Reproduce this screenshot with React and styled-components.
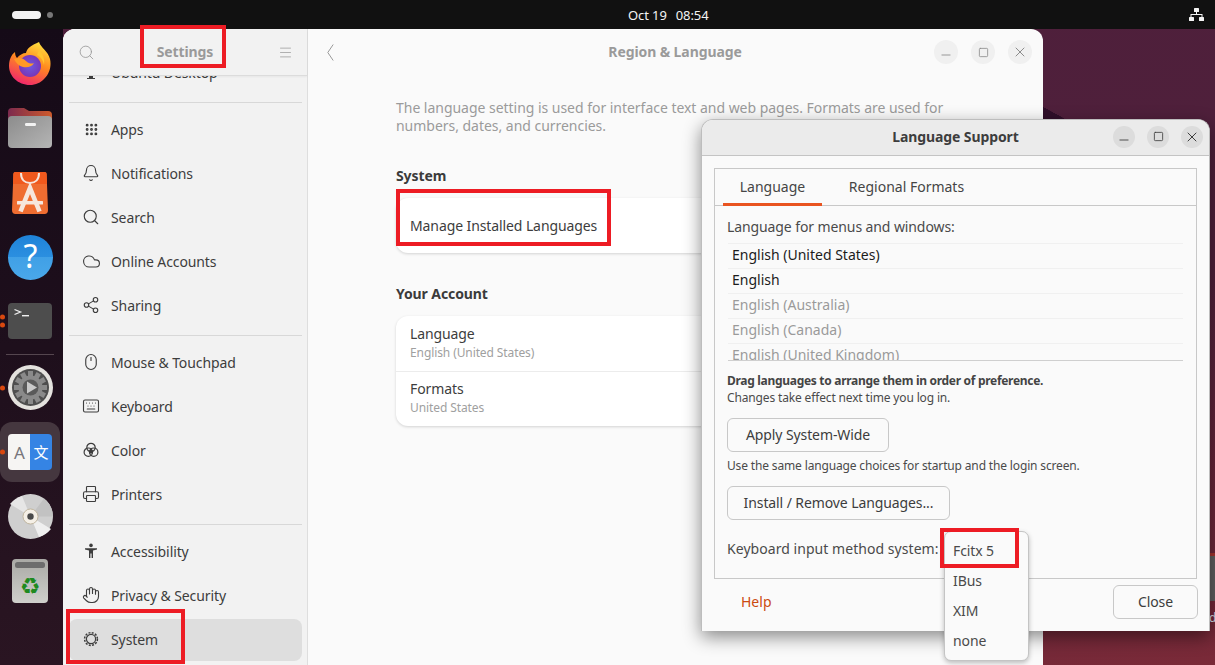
import React from "react";
import styled, { createGlobalStyle } from "styled-components";
import {
  Grip, Bell, Search, Cloud, Share2, Mouse, Keyboard, Printer, Hand, Menu,
  Minus, Square, X,
} from "lucide-react";

const Global = createGlobalStyle`
  html, body { margin: 0; padding: 0; overflow: hidden; }
  body { font-family: "Noto Sans", "DejaVu Sans", sans-serif; }
  * { box-sizing: border-box; }
`;

const Desktop = styled.div`
  position: relative;
  width: 1215px;
  height: 665px;
  overflow: hidden;
  display: flex;
  flex-direction: column;
  background:
    linear-gradient(to top right, #300f2a 50%, transparent 51%) 1043px 107px / 22px 12px no-repeat,
    linear-gradient(170deg, #4d1f3b 0%, #50203b 55%, #7a2a38 100%);
`;

const TopBar = styled.header`
  height: 29px;
  flex: none;
  background: #111111;
  display: grid;
  grid-template-columns: 616px auto 1fr;
  align-items: center;
  padding: 0 11px 0 12px;
  color: #f4f4f4;
  font-size: 13px;
`;
const Workspaces = styled.div`
  display: flex;
  align-items: center;
  gap: 6px;
`;
const WorkspacePill = styled.span`
  width: 29px;
  height: 8px;
  border-radius: 4px;
  background: #f2f2f2;
`;
const WorkspaceDot = styled.span`
  width: 6px;
  height: 6px;
  border-radius: 50%;
  background: #777;
`;
const Clock = styled.div`
  display: flex;
  gap: 9px;
  letter-spacing: -0.1px;
`;
const Tray = styled.div`
  display: flex;
  justify-content: flex-end;
`;

const Body = styled.div`
  flex: 1;
  display: flex;
  min-height: 0;
`;

const Dock = styled.nav`
  width: 63px;
  flex: none;
  display: flex;
  flex-direction: column;
  padding-top: 3px;
  background: linear-gradient(180deg, #150a17 0%, #1e0f1c 50%, #2a1522 100%);
`;
const DockItem = styled.div`
  position: relative;
  height: 64.3px;
  flex: none;
  display: flex;
  align-items: center;
  justify-content: center;
  width: 60px;
  &::before {
    content: "";
    position: absolute;
    inset: 2px 0;
    border-radius: 12px;
    background: ${(p) => (p.$active ? "#45373f" : "transparent")};
  }
  & > svg { position: relative; }
`;
const DockSeparator = styled.div`
  height: 1px;
  margin: 1px 9px 0 6px;
  width: 48px;
  flex: none;
  background: #55464f;
`;
const RunDots = styled.div`
  position: absolute;
  left: 0;
  top: 50%;
  transform: translateY(-50%);
  display: flex;
  flex-direction: column;
  gap: 3px;
`;
const RunDot = styled.span`
  width: 5px;
  height: 5px;
  border-radius: 50%;
  background: #d9480f;
`;

const SettingsWindow = styled.section`
  width: 980px;
  flex: none;
  display: flex;
  background: #fafafa;
  border-radius: 12px 12px 0 0;
  overflow: hidden;
`;
const Sidebar = styled.aside`
  width: 245px;
  flex: none;
  display: flex;
  flex-direction: column;
  background: #f2f2f2;
  border-right: 1px solid #dedede;
`;
const SidebarHeader = styled.div`
  height: 47px;
  flex: none;
  display: grid;
  grid-template-columns: 46px 1fr 44px;
  align-items: center;
  justify-items: center;
  border-bottom: 1px solid #dcdcdc;
  box-shadow: 0 1px 2px rgba(0, 0, 0, 0.05);
  background: #f2f2f2;
  color: #9a9a9a;
  position: relative;
  z-index: 1;
`;
const HeaderTitle = styled.div`
  font-size: 14px;
  font-weight: 700;
  color: #9a9a9a;
  letter-spacing: -0.1px;
`;
const SidebarTitle = styled(HeaderTitle)`
  margin-left: -2px;
  margin-top: -1px;
`;
const SideList = styled.div`
  flex: 1;
  min-height: 0;
  overflow: hidden;
  padding: 0 5px 0 6px;
`;
const SideRow = styled.div`
  height: ${(p) => (p.$selected ? 42 : 44)}px;
  margin-top: ${(p) => (p.$first ? -26 : p.$selected ? 2 : 0)}px;
  padding-bottom: ${(p) => (p.$selected ? 2 : 0)}px;
  display: flex;
  align-items: center;
  gap: 12px;
  padding-left: 14px;
  border-radius: 8px;
  font-size: 14px;
  color: #3d3d3d;
  background: ${(p) => (p.$selected ? "#dedede" : "transparent")};
  letter-spacing: -0.1px;
`;
const IconSlot = styled.span`
  width: 16px;
  height: 20px;
  flex: none;
  display: flex;
  align-items: center;
  justify-content: center;
  color: #3d3d3d;
  & > svg { flex: none; }
`;
const SideSeparator = styled.div`
  height: 1px;
  margin: 8px 0 4px;
  background: #d8d8d8;
`;

const Content = styled.main`
  flex: 1;
  min-width: 0;
  display: flex;
  flex-direction: column;
`;
const ContentHeader = styled.div`
  height: 46px;
  flex: none;
  display: flex;
  align-items: center;
  padding: 0 11px 0 19px;
  color: #9a9a9a;
`;
const ContentTitle = styled(HeaderTitle)`
  flex: 1;
  text-align: center;
  padding-left: 82px;
  margin-top: -1px;
`;
const WinButtons = styled.div`
  display: flex;
  gap: ${(p) => p.$gap || 13}px;
`;
const WinButton = styled.button`
  width: ${(p) => p.$size || 24}px;
  height: ${(p) => p.$size || 24}px;
  border: 0;
  padding: 0;
  border-radius: 50%;
  display: flex;
  align-items: center;
  justify-content: center;
  background: ${(p) => p.$bg || "#f0f0f0"};
  color: ${(p) => p.$color || "#8c8c8c"};
`;
const LoweredMinus = styled(Minus)`
  transform: translateY(3px);
`;
const Page = styled.div`
  width: 590px;
  margin-left: 88px;
  padding-top: 24px;
`;
const Intro = styled.p`
  margin: 0 0 32px;
  font-size: 14px;
  line-height: 18px;
  color: #9b9b9b;
  letter-spacing: -0.03px;
`;
const SectionTitle = styled.h3`
  margin: 0 0 13px;
  font-size: 14px;
  line-height: 18px;
  font-weight: 700;
  color: #3b3b3b;
  letter-spacing: -0.1px;
`;
const Card = styled.div`
  background: #fff;
  border-radius: 12px;
  box-shadow: 0 1px 3px rgba(0, 0, 0, 0.16);
  margin-bottom: 32px;
  overflow: hidden;
`;
const CardRow = styled.div`
  height: 55px;
  padding: 0 14px ${(p) => (p.$single ? 0 : 3)}px;
  display: flex;
  flex-direction: column;
  justify-content: center;
  border-top: ${(p) => (p.$divided ? "1px solid #ececec" : "0")};
`;
const RowTitle = styled.div`
  font-size: 14px;
  line-height: 20px;
  color: #3d3d3d;
  letter-spacing: -0.1px;
`;
const RowSub = styled.div`
  font-size: 12px;
  line-height: 17px;
  color: #a0a0a0;
  letter-spacing: -0.1px;
`;

const Dialog = styled.section`
  position: absolute;
  left: 701px;
  top: 119px;
  width: 509px;
  height: 512px;
  display: flex;
  flex-direction: column;
  background: #fafafa;
  border: 1px solid #bdbdbd;
  border-bottom: 0;
  border-radius: 12px 12px 0 0;
  box-shadow: 0 6px 18px rgba(0, 0, 0, 0.45);
`;
const DialogTitlebar = styled.div`
  height: 36px;
  flex: none;
  position: relative;
  display: flex;
  align-items: center;
  justify-content: flex-end;
  padding: 0 6px 2px 0;
  background: #ebebeb;
  border-bottom: 1px solid #c4c4c4;
  border-radius: 11px 11px 0 0;
`;
const DialogTitle = styled.div`
  position: absolute;
  left: 0;
  right: 0;
  text-align: center;
  font-size: 14px;
  font-weight: 700;
  color: #3d3d3d;
  letter-spacing: -0.1px;
  pointer-events: none;
`;
const Notebook = styled.div`
  margin: 12px 12px 0;
  height: 411px;
  flex: none;
  border: 1px solid #c8c8c8;
  background: #fafafa;
  display: flex;
  flex-direction: column;
`;
const TabBar = styled.div`
  height: 37px;
  flex: none;
  display: flex;
  padding-left: 8px;
  border-bottom: 1px solid #c8c8c8;
`;
const Tab = styled.div`
  width: ${(p) => p.$w}px;
  display: flex;
  align-items: center;
  justify-content: center;
  margin-bottom: -1px;
  font-size: 14px;
  color: #454545;
  border-bottom: 3px solid ${(p) => (p.$active ? "#e95420" : "transparent")};
`;
const Pane = styled.div`
  flex: 1;
  padding: 11px 12px 0;
  display: flex;
  flex-direction: column;
  align-items: flex-start;
`;
const PaneLabel = styled.div`
  font-size: 14px;
  line-height: 19px;
  color: #4a4a4a;
  letter-spacing: -0.1px;
`;
const LangList = styled.div`
  align-self: stretch;
  margin: 7px 1px 0 1px;
  height: 118px;
  flex: none;
  overflow: hidden;
  border-bottom: 1px solid #cfcfcf;
`;
const LangRow = styled.div`
  height: 25px;
  display: flex;
  align-items: center;
  padding: 0 0 3px 4px;
  font-size: 14px;
  color: ${(p) => (p.$on ? "#1c1c1c" : "#9a9a9a")};
  border-top: 1px solid #f0f0f0;
`;
const DragHint = styled.div`
  margin-top: 12px;
  font-size: 12px;
  line-height: 16px;
  font-weight: 700;
  color: #444;
  letter-spacing: -0.3px;
`;
const SmallText = styled.div`
  font-size: 12px;
  line-height: 16px;
  color: #4a4a4a;
  letter-spacing: -0.15px;
  margin-top: ${(p) => p.$mt || 0}px;
`;
const PushButton = styled.button`
  height: 34px;
  flex: none;
  width: ${(p) => p.$w}px;
  margin-top: ${(p) => p.$mt || 0}px;
  background: #fafafa;
  border: 1px solid #c8c8c8;
  border-radius: 6px;
  font: inherit;
  font-size: 14px;
  color: #3d3d3d;
  letter-spacing: -0.1px;
  padding: 0 0 2px;
`;
const InputLabel = styled(PaneLabel)`
  margin-top: 19px;
  letter-spacing: 0.05px;
`;
const DialogFooter = styled.div`
  flex: 1;
  display: flex;
  align-items: flex-start;
  justify-content: space-between;
  padding: 6px 11px 0 39px;
`;
const HelpLink = styled.div`
  font-size: 14px;
  line-height: 34px;
  color: #cc4a10;
`;
const Popup = styled.ul`
  position: absolute;
  left: 944px;
  top: 531px;
  width: 85px;
  height: 130px;
  margin: 0;
  padding: 3px 0;
  list-style: none;
  background: #fafafa;
  border: 1px solid #c4c4c4;
  border-radius: 7px;
  box-shadow: 0 2px 5px rgba(0, 0, 0, 0.25);
`;
const PopupItem = styled.li`
  height: 30px;
  display: flex;
  align-items: center;
  padding-left: 8px;
  font-size: 14px;
  color: #4a4a4a;
  letter-spacing: -0.1px;
`;
const Highlight = styled.div`
  position: absolute;
  z-index: 5;
  border: 4px solid #ed1c24;
  pointer-events: none;
  left: ${(p) => p.$x}px;
  top: ${(p) => p.$y}px;
  width: ${(p) => p.$w}px;
  height: ${(p) => p.$h}px;
`;
const BackgroundSliver = styled.div`
  position: absolute;
  left: 1210px;
  top: 553px;
  width: 5px;
  height: 48px;
  background: #5f5f5f;
  border-top: 3px solid #a5342e;
`;
const SliverGlyph = styled.div`
  position: absolute;
  left: 1209px;
  top: 610px;
  width: 6px;
  overflow: hidden;
  font-size: 12px;
  line-height: 16px;
  color: #d7dce6;
`;

const NetworkIcon = () => (
  <svg width="15" height="13" viewBox="0 0 15 15" preserveAspectRatio="none" fill="#f4f4f4">
    <rect x="5" y="0" width="5" height="4.5" rx="0.6" />
    <rect x="0" y="10.5" width="5" height="4.5" rx="0.6" />
    <rect x="10" y="10.5" width="5" height="4.5" rx="0.6" />
    <path d="M7 4.5h1V7h5.5v3.5h-1V8H2.5v2.5h-1V7H7z" />
  </svg>
);
const BackChevron = () => (
  <svg width="7" height="17" viewBox="0 0 7 17" fill="none" stroke="currentColor" strokeWidth="1">
    <path d="M6.2 0.5L0.8 8.5l5.4 8" />
  </svg>
);
const Firefox = () => (
  <svg width="44" height="46" viewBox="0 0 44 46">
    <defs>
      <linearGradient id="ffA" x1="0.7" y1="0" x2="0.3" y2="1">
        <stop offset="0" stopColor="#ffdf3e" />
        <stop offset="0.45" stopColor="#ff8a1f" />
        <stop offset="1" stopColor="#f0236f" />
      </linearGradient>
      <radialGradient id="ffB" cx="0.5" cy="0.5" r="0.6">
        <stop offset="0" stopColor="#6e5ae0" />
        <stop offset="1" stopColor="#7a2fb0" />
      </radialGradient>
    </defs>
    <path d="M31 1c2 6 9 9 11 17 3 13-7 26-20 26C10 44 1 35 1 25c0-6 2-11 6-14 0 3 1 5 2 6 2-3 6-5 9-5 1-5 6-8 13-11z" fill="url(#ffA)" />
    <circle cx="22" cy="25" r="11" fill="url(#ffB)" />
    <path d="M6 18c5-2 9-1 12 2 3 3 6 3 8 2-2 4-7 5-11 4-4-1-7-4-9-8z" fill="#ff9a26" />
    <path d="M31 9c4 4 6 9 5 15-1-5-3-8-7-10z" fill="#ffc52e" />
  </svg>
);
const Files = () => (
  <svg width="44" height="40" viewBox="0 0 44 40">
    <defs>
      <linearGradient id="fold" x1="0" x2="1">
        <stop offset="0" stopColor="#7c2a4e" />
        <stop offset="1" stopColor="#cf5b2c" />
      </linearGradient>
      <linearGradient id="fbody" x1="0" y1="0" x2="1" y2="1">
        <stop offset="0" stopColor="#8c8c8c" />
        <stop offset="1" stopColor="#b5b5b5" />
      </linearGradient>
    </defs>
    <path d="M0 4a4 4 0 0 1 4-4h12l5 3h19a4 4 0 0 1 4 4v12H0z" fill="url(#fold)" />
    <rect x="0" y="8" width="44" height="32" rx="4" fill="url(#fbody)" />
    <rect x="17" y="15" width="11" height="3" rx="1.2" fill="#f2f2f2" />
  </svg>
);
const AppStore = () => (
  <svg width="36" height="42" viewBox="0 0 36 42">
    <path d="M3 0h30a2 2 0 0 1 1.6 2L36 38q0 4-3.5 4H3.5Q0 42 0 38L1.4 2A2 2 0 0 1 3 0z" fill="#ef6d31" />
    <path d="M3 0h30a2 2 0 0 1 1.6 2L35 12H1L1.4 2A2 2 0 0 1 3 0z" fill="#f0591d" />
    <path d="M9 1c0 7 4 10 9 10s9-3 9-10" fill="none" stroke="#f6e6dc" strokeWidth="2" />
    <path d="M8.5 39.5L18 16l9.5 23.5" fill="none" stroke="#f6e6dc" strokeWidth="4.6" />
    <rect x="5" y="29" width="26" height="3.6" rx="0.5" fill="#f6e6dc" />
  </svg>
);
const HelpIcon = () => (
  <svg width="45" height="45" viewBox="0 0 45 45">
    <defs>
      <linearGradient id="hlp" x1="0" y1="0" x2="0" y2="1">
        <stop offset="0" stopColor="#1f83d8" />
        <stop offset="0.5" stopColor="#2b8fe0" />
        <stop offset="0.5" stopColor="#40a0e6" />
        <stop offset="1" stopColor="#4aa8ea" />
      </linearGradient>
    </defs>
    <circle cx="22.5" cy="22.5" r="22.5" fill="url(#hlp)" />
    <text x="22.5" y="33" textAnchor="middle" fontSize="32" fontFamily="Noto Sans, sans-serif" fill="#fff">?</text>
  </svg>
);
const Terminal = () => (
  <svg width="44" height="36" viewBox="0 0 44 36">
    <rect width="44" height="36" rx="4" fill="#4d4d4d" />
    <path d="M6.5 6.5l6 2.5-6 2.5" fill="none" stroke="#f0f0f0" strokeWidth="1.3" />
    <rect x="14" y="12" width="7" height="1.4" fill="#f0f0f0" />
  </svg>
);
const SettingsDock = () => {
  const teeth = Array.from({ length: 12 }, (_, i) => i * 30);
  return (
    <svg width="45" height="45" viewBox="0 0 45 45">
      <circle cx="22.5" cy="22.5" r="22.5" fill="#e4e2de" />
      <circle cx="22.5" cy="22.5" r="18.5" fill="#4e4e4e" />
      {teeth.map((a) => (
        <rect key={a} x="20" y="6" width="5" height="6" fill="#8a8a8a" transform={`rotate(${a} 22.5 22.5)`} />
      ))}
      <circle cx="22.5" cy="22.5" r="12" fill="#8a8a8a" />
      <circle cx="22.5" cy="22.5" r="8" fill="#5a5a5a" />
      <path d="M19 16.5l10 6-10 6z" fill="#c9c9c9" />
    </svg>
  );
};
const LangIcon = () => (
  <svg width="44" height="36" viewBox="0 0 44 36">
    <path d="M4 0h18v36H4a4 4 0 0 1-4-4V4a4 4 0 0 1 4-4z" fill="#f6f5f3" />
    <path d="M22 0h18a4 4 0 0 1 4 4v28a4 4 0 0 1-4 4H22z" fill="#3584e4" />
    <text x="11.5" y="25" textAnchor="middle" fontSize="17" fontFamily="Noto Sans, sans-serif" fill="#77767b">A</text>
    <text x="33" y="24" textAnchor="middle" fontSize="15" fontFamily="Noto Sans CJK SC, sans-serif" fill="#fff">文</text>
  </svg>
);
const Disc = () => (
  <svg width="45" height="45" viewBox="0 0 45 45">
    <circle cx="22.5" cy="22.5" r="22.5" fill="#cfcfcf" />
    <path d="M22.5 22.5L2 10a24 24 0 0 1 12-8z" fill="#e6e6e6" />
    <path d="M22.5 22.5L43 35a24 24 0 0 1-12 8z" fill="#efefef" />
    <path d="M22.5 22.5L45 22.5a24 24 0 0 0-9-18z" fill="#c2c2c2" />
    <circle cx="22.5" cy="22.5" r="7.5" fill="#f4efe6" stroke="#b8ab90" strokeWidth="0.8" />
    <circle cx="22.5" cy="22.5" r="3.2" fill="#4a4a4a" />
  </svg>
);
const Trash = () => (
  <svg width="36" height="44" viewBox="0 0 36 44">
    <defs>
      <linearGradient id="trash" x1="0" y1="0" x2="0" y2="1">
        <stop offset="0" stopColor="#a9a9a5" />
        <stop offset="1" stopColor="#cfcfcb" />
      </linearGradient>
    </defs>
    <rect width="36" height="44" rx="4" fill="url(#trash)" />
    <rect x="3" y="3" width="30" height="6" rx="2.5" fill="#6d6d6d" />
    <text x="18" y="35" textAnchor="middle" fontSize="23" fontFamily="DejaVu Sans, sans-serif" fill="#1f8a1f">♻</text>
  </svg>
);

const ColorIcon = () => (
  <svg width="16" height="16" viewBox="0 0 16 16" fill="none" stroke="#3d3d3d" strokeWidth="1.2">
    <circle cx="8" cy="5.5" r="4.2" />
    <circle cx="5.3" cy="10.2" r="4.2" />
    <circle cx="10.7" cy="10.2" r="4.2" />
    <path d="M8 7.5l2.2 1.5-.6 2.6H6.4L5.8 9z" fill="#3d3d3d" stroke="none" />
  </svg>
);
const AccessIcon = () => (
  <svg width="16" height="16" viewBox="0 0 16 16" fill="#3d3d3d">
    <circle cx="8" cy="2.4" r="1.8" />
    <path d="M2 5.2h12v1.4l-4 .8V15H8.6v-4.5H7.4V15H6V7.4l-4-.8z" />
  </svg>
);
const SystemIcon = () => (
  <svg width="16" height="16" viewBox="0 0 16 16" fill="none" stroke="#3d3d3d">
    <circle cx="8" cy="8" r="4.6" strokeWidth="1.2" />
    <circle cx="8" cy="8" r="6.4" strokeWidth="1.5" strokeDasharray="2 1.35" />
  </svg>
);
const DesktopIcon = () => (
  <svg width="16" height="16" viewBox="0 0 16 16" fill="#3d3d3d">
    <path d="M2 2h12v8H2zM0 11h16v1H0zM6 12h4v2h2v1H4v-1h2z" />
  </svg>
);

const ic = { size: 18, strokeWidth: 1.5 };
const groupA = [
  ["Apps", <Grip size={15} strokeWidth={2.6} key="a" />],
  ["Notifications", <Bell {...ic} key="b" />],
  ["Search", <Search {...ic} key="c" />],
  ["Online Accounts", <Cloud size={19} strokeWidth={1.4} key="d" />],
  ["Sharing", <Share2 {...ic} key="e" />],
];
const groupB = [
  ["Mouse & Touchpad", <Mouse {...ic} key="a" />],
  ["Keyboard", <Keyboard {...ic} key="b" />],
  ["Color", <ColorIcon key="c" />],
  ["Printers", <Printer {...ic} key="d" />],
];
const groupC = [
  ["Accessibility", <AccessIcon key="a" />],
  ["Privacy & Security", <Hand {...ic} key="b" />],
];

const WindowControls = ({ size, gap, bg, color }) => (
  <WinButtons $gap={gap}>
    <WinButton $size={size} $bg={bg} $color={color}><LoweredMinus size={14} strokeWidth={1.5} /></WinButton>
    <WinButton $size={size} $bg={bg} $color={color}><Square size={11} strokeWidth={1.8} /></WinButton>
    <WinButton $size={size} $bg={bg} $color={color}><X size={16} strokeWidth={1.5} /></WinButton>
  </WinButtons>
);

const SideRows = ({ rows }) =>
  rows.map(([label, icon]) => (
    <SideRow key={label}>
      <IconSlot>{icon}</IconSlot>
      {label}
    </SideRow>
  ));

export default function App() {
  return (
    <Desktop>
      <Global />
      <TopBar>
        <Workspaces>
          <WorkspacePill />
          <WorkspaceDot />
        </Workspaces>
        <Clock>
          <span>Oct 19</span>
          <span>08:54</span>
        </Clock>
        <Tray>
          <NetworkIcon />
        </Tray>
      </TopBar>
      <Body>
        <Dock>
          <DockItem><Firefox /></DockItem>
          <DockItem><Files /></DockItem>
          <DockItem><AppStore /></DockItem>
          <DockItem><HelpIcon /></DockItem>
          <DockItem>
            <RunDots><RunDot /><RunDot /></RunDots>
            <Terminal />
          </DockItem>
          <DockSeparator />
          <DockItem>
            <RunDots><RunDot /></RunDots>
            <SettingsDock />
          </DockItem>
          <DockItem $active>
            <RunDots><RunDot /></RunDots>
            <LangIcon />
          </DockItem>
          <DockItem><Disc /></DockItem>
          <DockItem><Trash /></DockItem>
        </Dock>
        <SettingsWindow>
          <Sidebar>
            <SidebarHeader>
              <Search size={17} strokeWidth={1.2} />
              <SidebarTitle>Settings</SidebarTitle>
              <Menu size={15} strokeWidth={1.2} />
            </SidebarHeader>
            <SideList>
              <SideRow $first>
                <IconSlot><DesktopIcon /></IconSlot>
                Ubuntu Desktop
              </SideRow>
              <SideSeparator />
              <SideRows rows={groupA} />
              <SideSeparator />
              <SideRows rows={groupB} />
              <SideSeparator />
              <SideRows rows={groupC} />
              <SideRow $selected>
                <IconSlot><SystemIcon /></IconSlot>
                System
              </SideRow>
            </SideList>
          </Sidebar>
          <Content>
            <ContentHeader>
              <BackChevron />
              <ContentTitle>Region &amp; Language</ContentTitle>
              <WindowControls />
            </ContentHeader>
            <Page>
              <Intro>
                The language setting is used for interface text and web pages. Formats are used for
                numbers, dates, and currencies.
              </Intro>
              <SectionTitle>System</SectionTitle>
              <Card>
                <CardRow $single>
                  <RowTitle>Manage Installed Languages</RowTitle>
                </CardRow>
              </Card>
              <SectionTitle>Your Account</SectionTitle>
              <Card>
                <CardRow>
                  <RowTitle>Language</RowTitle>
                  <RowSub>English (United States)</RowSub>
                </CardRow>
                <CardRow $divided>
                  <RowTitle>Formats</RowTitle>
                  <RowSub>United States</RowSub>
                </CardRow>
              </Card>
            </Page>
          </Content>
        </SettingsWindow>
      </Body>

      <BackgroundSliver />
      <SliverGlyph>d</SliverGlyph>

      <Dialog>
        <DialogTitlebar>
          <DialogTitle>Language Support</DialogTitle>
          <WindowControls size={22} gap={12} bg="#dcdcdc" color="#3d3d3d" />
        </DialogTitlebar>
        <Notebook>
          <TabBar>
            <Tab $w={99} $active>Language</Tab>
            <Tab $w={169}>Regional Formats</Tab>
          </TabBar>
          <Pane>
            <PaneLabel>Language for menus and windows:</PaneLabel>
            <LangList>
              <LangRow $on>English (United States)</LangRow>
              <LangRow $on>English</LangRow>
              <LangRow>English (Australia)</LangRow>
              <LangRow>English (Canada)</LangRow>
              <LangRow>English (United Kingdom)</LangRow>
            </LangList>
            <DragHint>Drag languages to arrange them in order of preference.</DragHint>
            <SmallText $mt={1}>Changes take effect next time you log in.</SmallText>
            <PushButton $w={162} $mt={12}>Apply System-Wide</PushButton>
            <SmallText $mt={6}>Use the same language choices for startup and the login screen.</SmallText>
            <PushButton $w={223} $mt={12}>Install / Remove Languages...</PushButton>
            <InputLabel>Keyboard input method system:</InputLabel>
          </Pane>
        </Notebook>
        <DialogFooter>
          <HelpLink>Help</HelpLink>
          <PushButton $w={85}>Close</PushButton>
        </DialogFooter>
      </Dialog>

      <Popup>
        <PopupItem>Fcitx 5</PopupItem>
        <PopupItem>IBus</PopupItem>
        <PopupItem>XIM</PopupItem>
        <PopupItem>none</PopupItem>
      </Popup>

      <Highlight $x={140} $y={25} $w={86} $h={43} />
      <Highlight $x={396} $y={189} $w={215} $h={57} />
      <Highlight $x={66} $y={609} $w={119} $h={55} />
      <Highlight $x={940} $y={528} $w={79} $h={40} />
    </Desktop>
  );
}
